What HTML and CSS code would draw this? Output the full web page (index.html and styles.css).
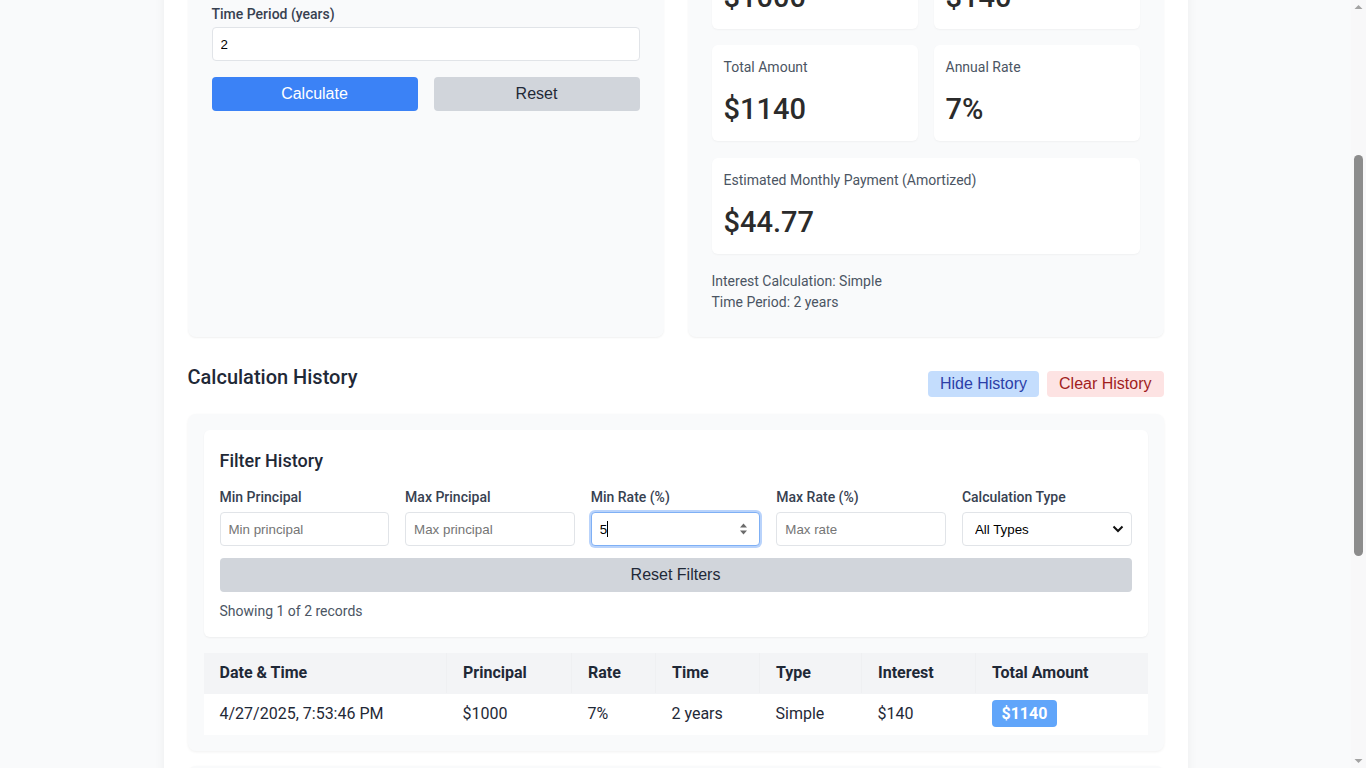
FILE: index.html
```html
<!DOCTYPE html>
<html lang="en">
<head>
<meta charset="utf-8">
<title>Interest Calculator</title>
<link rel="stylesheet" href="styles.css">
</head>
<body>
<div class="page">
  <header class="page-head">
    <h1 class="page-title">Interest Calculator</h1>
    <p class="page-sub">Calculate simple and compound interest on your loans and savings.</p>
  </header>

  <div class="calc-grid">
    <section class="card">
      <h2 class="card-title">Loan Details</h2>
      <div class="field-row">
        <div class="field">
          <label class="label">Principal ($)</label>
          <input class="input" type="text" value="1000">
        </div>
        <div class="field">
          <label class="label">Rate (%)</label>
          <input class="input" type="text" value="7">
        </div>
        <div class="field">
          <label class="label">Interest Type</label>
          <input class="input" type="text" value="Simple">
        </div>
      </div>
      <div class="field">
        <label class="label label-tight">Time Period (years)</label>
        <input class="input" type="text" value="2">
      </div>
      <div class="btn-row">
        <button class="btn btn-primary">Calculate</button>
        <button class="btn btn-gray">Reset</button>
      </div>
    </section>

    <section class="card">
      <h2 class="card-title">Results</h2>
      <div class="result-grid">
        <div class="result">
          <div class="result-label">Principal</div>
          <div class="result-value">$1000</div>
        </div>
        <div class="result">
          <div class="result-label">Total Interest</div>
          <div class="result-value">$140</div>
        </div>
        <div class="result" id="scroll-anchor">
          <div class="result-label">Total Amount</div>
          <div class="result-value">$1140</div>
        </div>
        <div class="result">
          <div class="result-label">Annual Rate</div>
          <div class="result-value">7%</div>
        </div>
        <div class="result result-wide">
          <div class="result-label">Estimated Monthly Payment (Amortized)</div>
          <div class="result-value">$44.77</div>
        </div>
      </div>
      <div class="result-info">
        <div>Interest Calculation: Simple</div>
        <div>Time Period: 2 years</div>
      </div>
    </section>
  </div>

  <div class="history-head">
    <h2 class="history-title">Calculation History</h2>
    <div class="history-actions">
      <button class="pill pill-blue">Hide History</button>
      <button class="pill pill-red">Clear History</button>
    </div>
  </div>

  <section class="panel">
    <div class="filter-card">
      <h3 class="filter-title">Filter History</h3>
      <div class="filter-grid">
        <div class="field">
          <label class="label label-filter">Min Principal</label>
          <input class="input" type="text" placeholder="Min principal">
        </div>
        <div class="field">
          <label class="label label-filter">Max Principal</label>
          <input class="input" type="text" placeholder="Max principal">
        </div>
        <div class="field">
          <label class="label label-filter">Min Rate (%)</label>
          <div class="num-wrap">
            <input class="input input-focus" type="text" value="5">
            <span class="caret"></span>
            <svg class="spin" width="9" height="16" viewBox="0 0 9 16"><path d="M4.5 2.5 L8 6.5 H1 Z" fill="#6b6b6b"/><path d="M4.5 13.5 L8 9.5 H1 Z" fill="#6b6b6b"/></svg>
          </div>
        </div>
        <div class="field">
          <label class="label label-filter">Max Rate (%)</label>
          <input class="input" type="text" placeholder="Max rate">
        </div>
        <div class="field">
          <label class="label label-filter">Calculation Type</label>
          <div class="select-wrap">
            <select class="select">
              <option>All Types</option>
              <option>Simple</option>
              <option>Compound</option>
            </select>
            <svg class="chev" width="12" height="8" viewBox="0 0 12 8"><path d="M1.5 1.5 L6 6 L10.5 1.5" fill="none" stroke="#111" stroke-width="2"/></svg>
          </div>
        </div>
      </div>
      <button class="btn btn-gray btn-block">Reset Filters</button>
      <p class="showing">Showing 1 of 2 records</p>
    </div>

    <table class="history-table">
      <colgroup>
        <col class="c-date"><col class="c-principal"><col class="c-rate"><col class="c-time"><col class="c-type"><col class="c-interest"><col class="c-total">
      </colgroup>
      <thead>
        <tr>
          <th>Date &amp; Time</th>
          <th>Principal</th>
          <th>Rate</th>
          <th>Time</th>
          <th>Type</th>
          <th>Interest</th>
          <th>Total Amount</th>
        </tr>
      </thead>
      <tbody>
        <tr>
          <td>4/27/2025, 7:53:46 PM</td>
          <td>$1000</td>
          <td>7%</td>
          <td>2 years</td>
          <td>Simple</td>
          <td>$140</td>
          <td><span class="badge">$1140</span></td>
        </tr>
      </tbody>
    </table>
  </section>

  <section class="panel chart-panel">
    <h3 class="filter-title">Interest Growth Over Time</h3>
    <div class="chart">
      <div class="bar-col"><div class="bar" style="height: 60%"></div><span class="bar-label">Year 0</span></div>
      <div class="bar-col"><div class="bar" style="height: 80%"></div><span class="bar-label">Year 1</span></div>
      <div class="bar-col"><div class="bar" style="height: 100%"></div><span class="bar-label">Year 2</span></div>
    </div>
  </section>
</div>

<div class="scrollbar" aria-hidden="true">
  <svg width="15" height="768" viewBox="0 0 15 768">
    <path d="M3.5 9 L7.5 5 L11.5 9 Z" fill="#a3a3a3"/>
    <rect x="3" y="155" width="9" height="401" rx="4.5" fill="#8c8c8c"/>
    <path d="M3.5 759 L7.5 763 L11.5 759 Z" fill="#a3a3a3"/>
  </svg>
</div>
<script src="script.js"></script>
</body>
</html>
```

FILE: styles.css
```css
* { box-sizing: border-box; }
html, body { margin: 0; padding: 0; }
body {
  background: #f9fafb;
  font-family: Roboto, "Noto Sans", "Liberation Sans", sans-serif;
  color: #1f2937;
  padding-right: 15px;
}
.page {
  max-width: 1024px;
  margin: 0 auto;
  background: #ffffff;
  padding: 24px;
  box-shadow: 0 0 10px rgba(0, 0, 0, 0.06);
}
.page-head { margin-bottom: 32px; }
.page-title { margin: 0 0 8px; font-size: 30px; line-height: 36px; font-weight: 700; }
.page-sub { margin: 0; font-size: 16px; line-height: 24px; color: #4b5563; }

.calc-grid {
  display: grid;
  grid-template-columns: 1fr 1fr;
  gap: 24px;
}
.card {
  background: #f9fafb;
  border-radius: 8px;
  padding: 24px;
  box-shadow: 0 1px 2px rgba(0, 0, 0, 0.06);
}
.card-title { margin: 0 0 16px; font-size: 20px; line-height: 28px; font-weight: 600; }

.field-row {
  display: grid;
  grid-template-columns: 1fr 1fr 1fr;
  gap: 16px;
  margin-bottom: 13px;
}
.field { display: flex; flex-direction: column; }
.label {
  font-size: 14px;
  line-height: 20px;
  font-weight: 500;
  color: #374151;
  margin-bottom: 4px;
}
.label-tight { margin-bottom: 3px; }
.label-filter { margin-bottom: 5px; }
.input {
  height: 34px;
  width: 100%;
  border: 1px solid #e1e4e8;
  border-radius: 4px;
  padding: 0 8px;
  background: #fff;
  font-family: "Liberation Sans", Arial, sans-serif;
  font-size: 13.333px;
  color: #000;
}
.input::placeholder { color: #757575; }
.input-focus {
  border: 1px solid #7fb0f5;
  box-shadow: 0 0 0 2px #b9d3fb;
  outline: none;
}
.btn-row { display: flex; gap: 16px; margin-top: 16px; }
.btn {
  flex: 1;
  height: 34px;
  border: none;
  border-radius: 4px;
  font-family: "Liberation Sans", Arial, sans-serif;
  font-size: 16px;
}
.btn-primary { background: #3b82f6; color: #fff; }
.btn-gray { background: #d1d5db; color: #1f2937; }
.btn-block { display: block; width: 100%; margin-top: 12px; }

.result-grid {
  display: grid;
  grid-template-columns: 1fr 1fr;
  column-gap: 16px;
  row-gap: 16px;
}
.result {
  background: #fff;
  border-radius: 6px;
  padding: 12px;
  box-shadow: 0 1px 2px rgba(0, 0, 0, 0.04);
}
.result-wide { grid-column: span 2; margin-top: 1px; }
.result-label { font-size: 14px; line-height: 20px; color: #4b5563; }
.result-value { margin-top: 12px; font-size: 29px; line-height: 40px; font-weight: 500; color: #2b2b2b; }
.result-info { margin-top: 17px; font-size: 14px; line-height: 21px; color: #4b5563; }

.history-head {
  display: flex;
  justify-content: space-between;
  align-items: flex-start;
  margin-top: 26px;
  margin-bottom: 17px;
}
.history-title { margin: 0; font-size: 20px; line-height: 28px; font-weight: 500; color: #1f2937; }
.history-actions { display: flex; gap: 8px; margin-top: 8px; }
.pill {
  height: 26px;
  padding: 0 12px;
  border: none;
  border-radius: 4px;
  font-family: "Liberation Sans", Arial, sans-serif;
  font-size: 16px;
}
.pill-blue { background: #c4ddfd; color: #2c3fa8; }
.pill-red { background: #fde3e3; color: #a11d1d; }

.panel {
  background: #f9fafb;
  border-radius: 8px;
  padding: 16px;
  box-shadow: 0 1px 3px rgba(0, 0, 0, 0.06);
}
.filter-card {
  background: #fff;
  border-radius: 6px;
  padding: 17px 16px 16px;
  box-shadow: 0 1px 2px rgba(0, 0, 0, 0.05);
}
.filter-title { margin: 0 0 12px; font-size: 18px; line-height: 28px; font-weight: 500; color: #1f2937; }
.filter-grid {
  display: grid;
  grid-template-columns: repeat(5, 1fr);
  gap: 16px;
}
.num-wrap, .select-wrap { position: relative; }
.caret {
  position: absolute;
  left: 16px;
  top: 9px;
  width: 1px;
  height: 16px;
  background: #000;
}
.spin { position: absolute; right: 12px; top: 9px; }
.select {
  appearance: none;
  -webkit-appearance: none;
  width: 100%;
  height: 34px;
  border: 1px solid #e1e4e8;
  border-radius: 4px;
  padding: 0 12px;
  background: #fff;
  font-family: "Liberation Sans", Arial, sans-serif;
  font-size: 13.333px;
  color: #000;
}
.chev { position: absolute; right: 8px; top: 13px; pointer-events: none; }
.showing { margin: 9px 0 0; font-size: 14px; line-height: 20px; color: #4b5563; }

.history-table {
  width: 100%;
  margin-top: 16px;
  border-collapse: collapse;
  table-layout: fixed;
}
.c-date { width: 243px; }
.c-principal { width: 125px; }
.c-rate { width: 84px; }
.c-time { width: 104px; }
.c-type { width: 102px; }
.c-interest { width: 114px; }
.c-total { width: 172px; }
.history-table th {
  text-align: left;
  background: #f3f4f6;
  padding: 8px 16px;
  font-size: 16px;
  line-height: 24px;
  font-weight: 700;
  color: #1f2937;
  border-right: 1px solid #eff0f2;
  border-bottom: 1px solid #f3f4f6;
}
.history-table th:last-child { border-right: none; }
.history-table td {
  background: #fff;
  padding: 8px 16px;
  font-size: 16px;
  line-height: 24px;
  color: #1f2937;
  border-bottom: 1px solid #fff;
}
.badge {
  background: #60a5fa;
  color: #fff;
  font-weight: 700;
  padding: 4px 10px;
  border-radius: 4px;
}

.chart-panel { margin-top: 15px; height: 340px; }
.chart {
  display: flex;
  align-items: flex-end;
  gap: 48px;
  height: 240px;
  padding: 0 48px;
  background: #fff;
  border-radius: 6px;
}
.bar-col { flex: 1; height: 100%; display: flex; flex-direction: column; justify-content: flex-end; align-items: center; }
.bar { width: 100%; background: #93c5fd; border-radius: 4px 4px 0 0; }
.bar-label { font-size: 14px; line-height: 20px; color: #4b5563; }

.scrollbar {
  position: fixed;
  top: 0;
  right: 0;
  width: 15px;
  height: 100vh;
  background: #f8f8f9;
}
.scrollbar svg { display: block; }
```

FILE: script.js
```js
(function () {
  function place() {
    var a = document.getElementById('scroll-anchor');
    if (!a) return;
    var y = a.getBoundingClientRect().top + window.scrollY - 45;
    window.scrollTo(0, y);
  }
  place();
  window.addEventListener('load', place);
})();
```
